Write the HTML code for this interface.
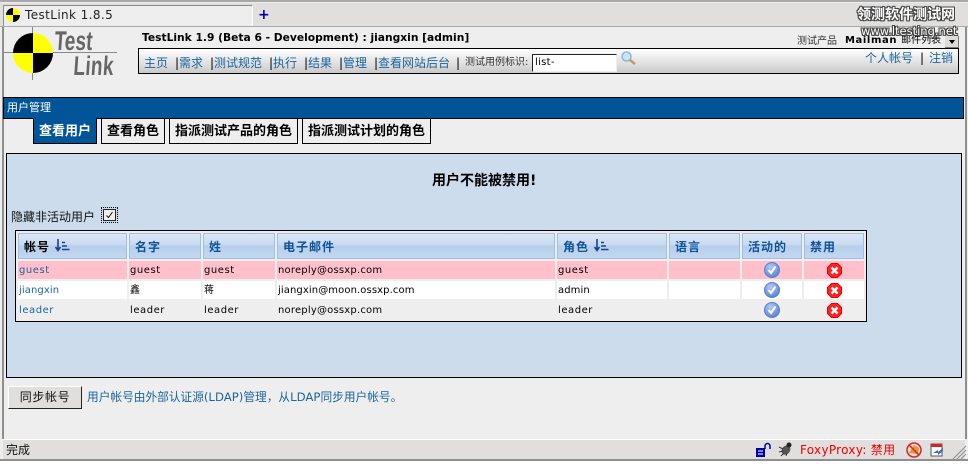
<!DOCTYPE html>
<html><head><meta charset="utf-8">
<style>
html,body{margin:0;padding:0}
body{width:968px;height:464px;overflow:hidden;position:relative;background:#eee;font-family:"DejaVu Sans","Noto Sans CJK SC",sans-serif;font-size:10px;color:#000}
.a{position:absolute;white-space:nowrap}
.b{position:absolute;box-sizing:border-box}
.n{position:absolute;top:55px;font-size:12px;line-height:16px;color:#1b659f;white-space:nowrap}
.s{position:absolute;top:56px;font-size:12px;line-height:14px;color:#000}
.tab{position:absolute;top:118px;height:26px;box-sizing:border-box;border:1px solid #000;background:#eee;font-weight:bold;font-size:13px;line-height:26px;text-align:center;white-space:nowrap}
.th{position:absolute;top:233px;height:26px;box-sizing:border-box;border:1px solid #9cc0e6;background:linear-gradient(#dbe7f6 0,#c8daf1 45%,#b6cfec 50%,#c2d6ef 100%);color:#0f5298;font-weight:bold;font-size:12px;line-height:27px;padding-left:5px;white-space:nowrap;letter-spacing:1px}
.c{position:absolute;height:18px;font-size:10px;line-height:19px;padding-left:1px;box-sizing:border-box;white-space:nowrap;letter-spacing:.55px}
.e{letter-spacing:.2px}
.j{letter-spacing:.1px}
.l{color:#1b659f}
svg{position:absolute;overflow:visible}
</style></head><body>
<!-- browser chrome -->
<div class="b" style="left:0;top:0;width:968px;height:3px;background:#eee;border-top:2px solid #a8a8a6"></div>
<div class="b" style="left:0;top:3px;width:968px;height:24px;background:#e0dfdd;border-bottom:1px solid #a8a8a6"></div>
<div class="b" style="left:3px;top:5px;width:250px;height:21px;background:#eee;border-top:1px solid #8a8a88;border-left:1px solid #8a8a88;border-right:1px solid #fff"></div>
<svg style="left:6px;top:8px" width="14" height="14" viewBox="0 0 14 14"><circle cx="7" cy="7" r="7" fill="#ff0"/><path d="M7 7V0A7 7 0 0 0 0 7ZM7 7V14A7 7 0 0 0 14 7Z" fill="#000"/></svg>
<div class="a" style="left:25px;top:7px;font-size:12px;line-height:16px;letter-spacing:.4px;color:#222">TestLink 1.8.5</div>
<div class="a" style="left:258px;top:7px;font-size:14px;line-height:16px;font-weight:bold;color:#00a">+</div>
<div class="b" style="left:2px;top:27px;width:2px;height:412px;background:#8f8f8d"></div>
<div class="b" style="left:965px;top:27px;width:2px;height:412px;background:#8f8f8d"></div>
<!-- logo -->
<div class="b" style="left:3px;top:52px;width:114px;height:1px;background:#888"></div>
<div class="b" style="left:32px;top:27px;width:1px;height:53px;background:#888"></div>
<svg style="left:13px;top:33px" width="40" height="40" viewBox="0 0 40 40"><circle cx="20" cy="20" r="20" fill="#ff0"/><path d="M20 20V0A20 20 0 0 0 0 20ZM20 20V40A20 20 0 0 0 40 20Z" fill="#000"/></svg>
<svg style="left:0;top:0" width="130" height="85"><g font-family="'Liberation Sans',sans-serif" font-weight="bold" font-size="20" fill="#666"><text transform="translate(54 50) skewX(-4) scale(.95 1.35)" textLength="40">Test</text><text transform="translate(73 75) skewX(-4) scale(.95 1.35)" textLength="42">Link</text></g></svg>
<!-- title -->
<div class="a" style="left:142px;top:30px;font-weight:bold;font-size:10.7px;line-height:15px">TestLink 1.9 (Beta 6 - Development) : jiangxin [admin]</div>
<div class="a" style="left:797px;top:35px;font-size:10px;line-height:14px;color:#333">测试产品</div>
<div class="a" style="left:845px;top:34px;font-size:10px;line-height:14px;font-weight:bold;letter-spacing:.6px">Mailman <span style="font-weight:normal;letter-spacing:0">邮件列表</span></div>
<!-- watermark -->
<div class="a" style="left:857px;top:7px;font-size:14px;line-height:17px;font-weight:bold;color:#fff;text-shadow:-1px -1px 0 #444,1px -1px 0 #444,-1px 1px 0 #444,1px 1px 0 #444,0 1px 0 #444,1px 0 0 #444,-1px 0 0 #444,0 -1px 0 #444">领测软件测试网</div>
<div class="b" style="left:945px;top:36px;width:14px;height:12px;background:#dcdbd9;border-right:1px solid #777;border-bottom:1px solid #777"></div>
<div class="b" style="left:949px;top:40px;border-left:3px solid transparent;border-right:3px solid transparent;border-top:4px solid #000"></div>
<div class="a" style="left:861px;top:24px;font-size:11.5px;line-height:14px;color:#fff;text-shadow:-1px -1px 0 #444,1px -1px 0 #444,-1px 1px 0 #444,1px 1px 0 #444,0 1px 0 #444,1px 0 0 #444,-1px 0 0 #444,0 -1px 0 #444">www.ltesting.net</div>
<!-- nav -->
<div class="b" style="left:138px;top:48px;width:821px;height:26px;border:1px solid #000;background:linear-gradient(#fff 0,#efefef 30%,#dedede 65%,#c8c8c8 100%)"></div>
<div class="n" style="left:144px">主页</div><div class="s" style="left:175px">|</div>
<div class="n" style="left:179px">需求</div><div class="s" style="left:210px">|</div>
<div class="n" style="left:214px">测试规范</div><div class="s" style="left:269px">|</div>
<div class="n" style="left:273px">执行</div><div class="s" style="left:304px">|</div>
<div class="n" style="left:308px">结果</div><div class="s" style="left:339px">|</div>
<div class="n" style="left:343px">管理</div><div class="s" style="left:374px">|</div>
<div class="n" style="left:378px">查看网站后台</div><div class="s" style="left:456px">|</div>
<div class="a" style="left:465px;top:56px;font-size:10px;line-height:14px;color:#333">测试用例标识:</div>
<div class="b" style="left:532px;top:54px;width:85px;height:18px;background:#fff;border:1px solid;border-color:#222 #eee #eee #222;font-size:10px;line-height:15px;padding-left:2px;letter-spacing:.3px">list-</div>
<svg style="left:621px;top:51px" width="16" height="14" viewBox="0 0 16 14"><circle cx="5.5" cy="5.5" r="4.5" fill="#cfe3f7" stroke="#8fb5de" stroke-width="1.5"/><path d="M9 9L14 13" stroke="#c49a55" stroke-width="2.5"/></svg>
<div class="n" style="left:865px;top:50px">个人帐号</div><div class="s" style="left:920px;top:51px">|</div>
<div class="n" style="left:929px;top:50px">注销</div>
<!-- title bar -->
<div class="b" style="left:3px;top:97px;width:961px;height:22px;background:#005498;border:1px solid #000"></div>
<div class="a" style="left:7px;top:100px;color:#fff;font-size:11px;line-height:16px">用户管理</div>
<!-- tabs -->
<div class="tab" style="left:33px;width:64px;background:#005498;color:#fff;border-top-color:#005498">查看用户</div>
<div class="tab" style="left:101px;width:64px">查看角色</div>
<div class="tab" style="left:169px;width:129px">指派测试产品的角色</div>
<div class="tab" style="left:302px;width:129px">指派测试计划的角色</div>
<!-- panel -->
<div class="b" style="left:6px;top:153px;width:956px;height:225px;background:#ccdcec;border:1px solid #000"></div>
<div class="a" style="left:432px;top:172px;font-weight:bold;font-size:14px;line-height:18px">用户不能被禁用!</div>
<div class="a" style="left:11px;top:209px;font-size:12px;line-height:16px;color:#111">隐藏非活动用户</div>
<div class="b" style="left:101px;top:207px;width:17px;height:16px;border:1px dotted #000"></div>
<div class="b" style="left:103px;top:209px;width:13px;height:12px;background:#eee;border:1px solid #222"></div>
<svg style="left:105px;top:211px" width="9" height="8" viewBox="0 0 9 8"><path d="M1.5 4.5L3.5 6.5L7.5 1" fill="none" stroke="#111" stroke-width="1"/></svg>
<!-- table -->
<div class="b" style="left:15px;top:230px;width:852px;height:92px;background:#eee;border:1px solid #000"></div>
<div class="th" style="left:18px;width:109px;color:#000">帐号</div>
<svg style="left:55px;top:239px" width="15" height="13" viewBox="0 0 15 13"><path d="M3 0V10M.5 8L3 11.5L5.5 8M7 3.5H10M7 7H12M7 10.5H14.5" fill="none" stroke="#1a3f96" stroke-width="1.6"/></svg>
<div class="th" style="left:129px;width:72px">名字</div>
<div class="th" style="left:203px;width:72px">姓</div>
<div class="th" style="left:277px;width:278px">电子邮件</div>
<div class="th" style="left:557px;width:110px">角色</div>
<svg style="left:594px;top:239px" width="15" height="13" viewBox="0 0 15 13"><path d="M3 0V10M.5 8L3 11.5L5.5 8M7 3.5H10M7 7H12M7 10.5H14.5" fill="none" stroke="#1a3f96" stroke-width="1.6"/></svg>
<div class="th" style="left:669px;width:71px">语言</div>
<div class="th" style="left:742px;width:60px">活动的</div>
<div class="th" style="left:804px;width:60px">禁用</div>
<!-- row 1 -->
<div class="c l" style="left:18px;top:261px;width:109px;background:#ffc0cb">guest</div>
<div class="c" style="left:129px;top:261px;width:72px;background:#ffc0cb">guest</div>
<div class="c" style="left:203px;top:261px;width:72px;background:#ffc0cb">guest</div>
<div class="c e" style="left:277px;top:261px;width:278px;background:#ffc0cb">noreply@ossxp.com</div>
<div class="c" style="left:557px;top:261px;width:110px;background:#ffc0cb">guest</div>
<div class="c" style="left:669px;top:261px;width:71px;background:#ffc0cb"></div>
<div class="c" style="left:742px;top:261px;width:60px;background:#ffc0cb"></div>
<div class="c" style="left:804px;top:261px;width:60px;background:#ffc0cb"></div>
<!-- row 2 -->
<div class="c l j" style="left:18px;top:281px;width:109px;background:#fff">jiangxin</div>
<div class="c" style="left:129px;top:281px;width:72px;background:#fff">鑫</div>
<div class="c" style="left:203px;top:281px;width:72px;background:#fff">蒋</div>
<div class="c j" style="left:277px;top:281px;width:278px;background:#fff">jiangxin@moon.ossxp.com</div>
<div class="c j" style="left:557px;top:281px;width:110px;background:#fff">admin</div>
<div class="c" style="left:669px;top:281px;width:71px;background:#fff"></div>
<div class="c" style="left:742px;top:281px;width:60px;background:#fff"></div>
<div class="c" style="left:804px;top:281px;width:60px;background:#fff"></div>
<!-- row 3 -->
<div class="c l" style="left:18px;top:301px;width:109px">leader</div>
<div class="c" style="left:129px;top:301px;width:72px">leader</div>
<div class="c" style="left:203px;top:301px;width:72px">leader</div>
<div class="c e" style="left:277px;top:301px;width:278px">noreply@ossxp.com</div>
<div class="c" style="left:557px;top:301px;width:110px">leader</div>
<!-- status icons -->
<svg width="0" height="0" style="left:0;top:0"><defs>
<radialGradient id="bg" cx=".4" cy=".3" r=".8"><stop offset="0" stop-color="#b5cdf5"/><stop offset="1" stop-color="#4d78d6"/></radialGradient>
<g id="ok"><circle cx="8" cy="8" r="7.5" fill="url(#bg)" stroke="#5a7cc4" stroke-width="1"/><path d="M4.5 8L7 11L11.5 4.5" fill="none" stroke="#fff" stroke-width="2"/></g>
<g id="no"><path d="M4.5 .5H10.5L14.5 4.5V10.5L10.5 14.5H4.5L.5 10.5V4.5Z" fill="#f22" stroke="#e00"/><path d="M4.5 4.5L10.5 10.5M10.5 4.5L4.5 10.5" stroke="#fff" stroke-width="2.4"/></g>
</defs></svg>
<svg style="left:764px;top:262px" width="16" height="16"><use href="#ok"/></svg>
<svg style="left:764px;top:282px" width="16" height="16"><use href="#ok"/></svg>
<svg style="left:764px;top:302px" width="16" height="16"><use href="#ok"/></svg>
<svg style="left:827px;top:263px" width="15" height="15"><use href="#no"/></svg>
<svg style="left:827px;top:283px" width="15" height="15"><use href="#no"/></svg>
<svg style="left:827px;top:303px" width="15" height="15"><use href="#no"/></svg>
<!-- button -->
<div class="b" style="left:8px;top:386px;width:74px;height:23px;background:#e0dfdd;border:1px solid;border-color:#fff #222 #222 #fff;font-size:12px;line-height:20px;text-align:center;color:#111;letter-spacing:.6px">同步帐号</div>
<div class="a" style="left:87px;top:390px;font-size:11.7px;line-height:15px;color:#1b659f">用户帐号由外部认证源(LDAP)管理，从LDAP同步用户帐号。</div>
<!-- status bar -->
<div class="b" style="left:3px;top:439px;width:962px;height:21px;background:#e0dfdd;border-top:1px solid #fff"></div>
<div class="b" style="left:0;top:459px;width:968px;height:2px;background:#8f8f8d"></div>
<div class="b" style="left:0;top:461px;width:968px;height:3px;background:#fff"></div>
<div class="a" style="left:6px;top:442px;font-size:12px;line-height:16px;color:#111">完成</div>
<svg style="left:755px;top:443px" width="16" height="14" viewBox="0 0 16 14"><rect x="1" y="5" width="9" height="9" fill="#00a"/><path d="M3 8H8M3 11H8" stroke="#fff"/><path d="M10 6V3a2.5 2.5 0 0 1 5 0V6" fill="none" stroke="#00a" stroke-width="1.5"/></svg>
<svg style="left:778px;top:441px" width="16" height="16" viewBox="0 0 16 16"><ellipse cx="8" cy="9" rx="4" ry="5" fill="#555" transform="rotate(40 8 9)"/><circle cx="11" cy="4" r="2.5" fill="#222"/><path d="M1 6L5 8M1 11L5 10M3 15L6 12M8 15L9 12" stroke="#333"/></svg>
<div class="a" style="left:800px;top:442px;font-size:12px;line-height:16px;color:#e00;letter-spacing:.3px">FoxyProxy: 禁用</div>
<svg style="left:906px;top:442px" width="16" height="16" viewBox="0 0 16 16"><path d="M3 11L8 3L13 6L12 12Z" fill="#e8962e"/><circle cx="8" cy="8" r="7" fill="none" stroke="#d22" stroke-width="1.5"/><path d="M3 3L13 13" stroke="#d22" stroke-width="1.5"/></svg>
<svg style="left:930px;top:443px" width="15" height="14" viewBox="0 0 15 14"><rect x="1" y="1" width="11" height="12" fill="#fff" stroke="#555"/><rect x="1" y="1" width="11" height="3" fill="#d22"/><path d="M3 10L8 7V9L13 5V8L8 12V10Z" fill="#3a6ecc"/></svg>
<svg style="left:952px;top:446px" width="14" height="13" viewBox="0 0 14 13"><path d="M1 13L14 0M5 13L14 4M9 13L14 8" stroke="#8f8f8d" stroke-width="1"/></svg>
</body></html>
